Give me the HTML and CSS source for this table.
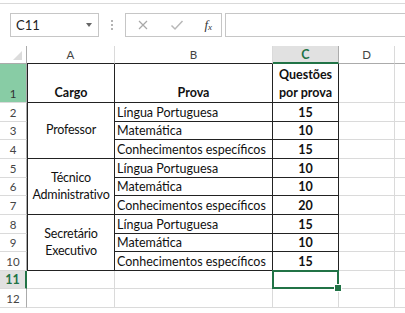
FILE: index.html
```html
<!DOCTYPE html>
<html lang="pt">
<head>
<meta charset="utf-8">
<link rel="stylesheet" href="styles.css">
</head>
<body>
<div class="app">
  <div class="ribbon-edge"></div>
  <div class="fbar">
    <div class="namebox"><span class="ref">C11</span><span class="caret"></span></div>
    <div class="grip"><i></i><i></i><i></i></div>
    <div class="fbtns">
      <svg class="ico" width="12" height="12" viewBox="0 0 12 12"><path d="M2 2 L10 10 M10 2 L2 10" stroke="#a8a8a8" stroke-width="1.2" fill="none"/></svg>
      <svg class="ico" width="14" height="12" viewBox="0 0 14 12"><path d="M1.5 6.5 L5 10 L12.5 2" stroke="#b8b8b8" stroke-width="1.5" fill="none"/></svg>
      <span class="fx">f<sub>x</sub></span>
    </div>
    <div class="finput"></div>
  </div>
  <div class="sheet">
    <div class="ch corner"><span class="tri"></span></div>
    <div class="ch dk">A</div>
    <div class="ch dk">B</div>
    <div class="ch selc">C</div>
    <div class="ch">D</div>
    <div class="ch last"></div>

    <div class="rh green">1</div>
    <div class="c t tl hdr">Cargo</div>
    <div class="c t hdr">Prova</div>
    <div class="c t hdr">Questões<br>por prova</div>
    <div class="c"></div>
    <div class="c last"></div>

    <div class="rh">2</div>
    <div class="c t tl merge">Professor</div>
    <div class="c t txt">Língua Portuguesa</div>
    <div class="c t num">15</div>
    <div class="c"></div>
    <div class="c last"></div>

    <div class="rh">3</div>
    <div class="c t txt">Matemática</div>
    <div class="c t num">10</div>
    <div class="c"></div>
    <div class="c last"></div>

    <div class="rh">4</div>
    <div class="c t txt">Conhecimentos específicos</div>
    <div class="c t num">15</div>
    <div class="c"></div>
    <div class="c last"></div>

    <div class="rh">5</div>
    <div class="c t tl merge">Técnico<br>Administrativo</div>
    <div class="c t txt">Língua Portuguesa</div>
    <div class="c t num">10</div>
    <div class="c"></div>
    <div class="c last"></div>

    <div class="rh">6</div>
    <div class="c t txt">Matemática</div>
    <div class="c t num">10</div>
    <div class="c"></div>
    <div class="c last"></div>

    <div class="rh">7</div>
    <div class="c t txt">Conhecimentos específicos</div>
    <div class="c t num">20</div>
    <div class="c"></div>
    <div class="c last"></div>

    <div class="rh">8</div>
    <div class="c t tl merge">Secretário<br>Executivo</div>
    <div class="c t txt">Língua Portuguesa</div>
    <div class="c t num">15</div>
    <div class="c"></div>
    <div class="c last"></div>

    <div class="rh">9</div>
    <div class="c t txt">Matemática</div>
    <div class="c t num">10</div>
    <div class="c"></div>
    <div class="c last"></div>

    <div class="rh">10</div>
    <div class="c t txt">Conhecimentos específicos</div>
    <div class="c t num">15</div>
    <div class="c"></div>
    <div class="c last"></div>

    <div class="rh selr">11</div>
    <div class="c"></div>
    <div class="c"></div>
    <div class="c sel"></div>
    <div class="c"></div>
    <div class="c last"></div>

    <div class="rh">12</div>
    <div class="c"></div>
    <div class="c"></div>
    <div class="c"></div>
    <div class="c"></div>
    <div class="c last"></div>
  </div>
</div>
</body>
</html>
```
FILE: styles.css
```css
* { box-sizing: border-box; }
html, body { margin: 0; padding: 0; background: #fff; }
body { width: 405px; height: 313px; overflow: hidden; font-family: Lato, "Open Sans", sans-serif; color: #111; }

.ribbon-edge { height: 4px; border-bottom: 1px solid #d9d9d9; }

.fbar { display: flex; align-items: stretch; padding: 9px 0 0 10px; height: 42px; }
.fbar > * { height: 24px; }
.namebox { width: 89px; border: 1px solid #c6c6c6; display: flex; align-items: center; justify-content: space-between; padding: 0 6px 0 5px; font-size: 13px; color: #222; }
.caret { width: 0; height: 0; border-left: 3.5px solid transparent; border-right: 3.5px solid transparent; border-top: 4px solid #666; }
.grip { width: 26px; display: flex; flex-direction: column; align-items: center; justify-content: center; gap: 2px; }
.grip i { width: 2px; height: 2px; background: #b4b4b4; display: block; }
.fbtns { width: 97px; border: 1px solid #c6c6c6; display: flex; align-items: center; justify-content: space-between; padding: 0 9px 0 11px; }
.fx { font-family: "Liberation Serif", serif; font-style: italic; font-size: 13px; color: #333; }
.fx sub { font-size: 9px; vertical-align: -1px; }
.finput { flex: 1; margin-left: 3px; border: 1px solid #c6c6c6; border-right: none; }

.sheet {
  display: grid;
  grid-template-columns: 27px 88px 158px 66px 56px 1fr;
  grid-template-rows: 18px 39px 19px 18px 19px 19px 18px 19px 19px 18px 19px 18px 19px 18px;
  font-size: 12.5px;
}
.ch { border-right: 1px solid #dadada; border-bottom: 1px solid #ababab; display: flex; align-items: center; justify-content: center; font-size: 11.5px; color: #444; }
.ch.dk { border-bottom-color: #222; }
.ch.corner { border-right-color: #ababab; position: relative; }
.tri { position: absolute; right: 4px; bottom: 3px; width: 0; height: 0; border-left: 9px solid transparent; border-bottom: 9px solid #dcdcdc; }
.ch.selc { background: #e1e1e1; color: #217346; font-weight: 700; font-size: 12.5px; border-bottom: 2px solid #217346; border-right-color: #ababab; }
.ch.last, .c.last { border-right: none; }

.rh { border-right: 1px solid #ababab; border-bottom: 1px solid #dadada; display: flex; align-items: center; justify-content: center; font-size: 11.5px; color: #444; }
.rh.green { background: #88cca5; align-items: flex-end; padding-bottom: 2px; color: #333; }
.rh.selr { background: #e1e1e1; color: #217346; font-weight: 700; font-size: 12.5px; border-right: 2px solid #217346; }

.c { border-right: 1px solid #dadada; border-bottom: 1px solid #dadada; display: flex; align-items: flex-end; padding-bottom: 1px; white-space: nowrap; }
.c.t { border-right-color: #222; border-bottom-color: #222; }
.c.tl { border-left: 1px solid #222; }
.c.hdr { font-weight: 700; justify-content: center; text-align: center; line-height: 18px; padding-bottom: 0; }
.c.merge { grid-row: span 3; align-items: center; justify-content: center; text-align: center; line-height: 17px; padding-bottom: 2px; }
.c.merge { letter-spacing: -0.2px; }
.c.txt { padding-left: 2px; }
.c.num { justify-content: center; font-weight: 700; }
.c.sel { position: relative; }
.c.sel::before { content: ""; position: absolute; left: -1px; top: -1px; right: -1px; bottom: -1px; border: 2px solid #217346; }
.c.sel::after { content: ""; position: absolute; right: -4px; bottom: -4px; width: 6px; height: 6px; background: #217346; border: 1px solid #fff; }
```
